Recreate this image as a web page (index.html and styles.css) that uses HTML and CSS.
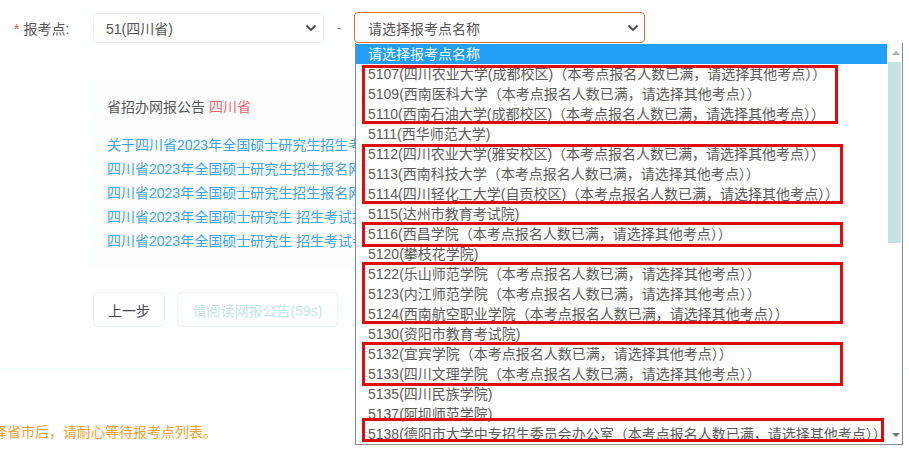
FILE: index.html
```
<!DOCTYPE html>
<html lang="zh-CN">
<head>
<meta charset="utf-8">
<title>报考点</title>
<link rel="stylesheet" href="styles.css">
</head>
<body>
<div class="page">
  <div class="form-row">
    <div class="label"><span class="star">*</span>报考点:</div>
    <div class="select sel-prov">
      <span>51(四川省)</span>
      <svg class="chev" width="12" height="8" viewBox="0 0 12 8"><polyline points="1.5,1.5 6,6 10.5,1.5" fill="none" stroke="#4a4a4a" stroke-width="1.8"/></svg>
    </div>
    <div class="dash">-</div>
    <div class="select sel-site">
      <span>请选择报考点名称</span>
      <svg class="chev" width="12" height="8" viewBox="0 0 12 8"><polyline points="1.5,1.5 6,6 10.5,1.5" fill="none" stroke="#4a4a4a" stroke-width="1.8"/></svg>
    </div>
  </div>

  <div class="notice">
    <div class="notice-title">省招办网报公告 <span class="prov">四川省</span></div>
    <ul class="links">
      <li>关于四川省2023年全国硕士研究生招生考试网上报名的公告</li>
      <li>四川省2023年全国硕士研究生招生报名网上确认公告</li>
      <li>四川省2023年全国硕士研究生招生报名网报须知</li>
      <li>四川省2023年全国硕士研究生 招生考试报考点信息</li>
      <li>四川省2023年全国硕士研究生 招生考试考生须知</li>
    </ul>
  </div>

  <div class="buttons">
    <button class="btn">上一步</button>
    <button class="btn btn-disabled">请阅读网报公告(59s)</button>
  </div>
</div>
<div class="divider"></div>
<p class="tip">选择省市后，请耐心等待报考点列表。</p>

<div class="dropdown">
  <div class="list">
    <div class="opt opt-head">请选择报考点名称</div>
    <div class="opt">5107(四川农业大学(成都校区)（本考点报名人数已满，请选择其他考点））</div>
    <div class="opt">5109(西南医科大学（本考点报名人数已满，请选择其他考点））</div>
    <div class="opt">5110(西南石油大学(成都校区)（本考点报名人数已满，请选择其他考点））</div>
    <div class="opt">5111(西华师范大学)</div>
    <div class="opt">5112(四川农业大学(雅安校区)（本考点报名人数已满，请选择其他考点））</div>
    <div class="opt">5113(西南科技大学（本考点报名人数已满，请选择其他考点））</div>
    <div class="opt">5114(四川轻化工大学(自贡校区)（本考点报名人数已满，请选择其他考点））</div>
    <div class="opt">5115(达州市教育考试院)</div>
    <div class="opt">5116(西昌学院（本考点报名人数已满，请选择其他考点））</div>
    <div class="opt">5120(攀枝花学院)</div>
    <div class="opt">5122(乐山师范学院（本考点报名人数已满，请选择其他考点））</div>
    <div class="opt">5123(内江师范学院（本考点报名人数已满，请选择其他考点））</div>
    <div class="opt">5124(西南航空职业学院（本考点报名人数已满，请选择其他考点））</div>
    <div class="opt">5130(资阳市教育考试院)</div>
    <div class="opt">5132(宜宾学院（本考点报名人数已满，请选择其他考点））</div>
    <div class="opt">5133(四川文理学院（本考点报名人数已满，请选择其他考点））</div>
    <div class="opt">5135(四川民族学院)</div>
    <div class="opt">5137(阿坝师范学院)</div>
    <div class="opt">5138(德阳市大学中专招生委员会办公室（本考点报名人数已满，请选择其他考点））</div>
  </div>
  <div class="scrollbar">
    <div class="sb-arrow sb-up"></div>
    <div class="sb-thumb"></div>
    <div class="sb-track"></div>
    <div class="sb-arrow sb-down"></div>
  </div>
  <div class="mark mark1"></div>
  <div class="mark mark2"></div>
  <div class="mark mark3"></div>
  <div class="mark mark4"></div>
  <div class="mark mark5"></div>
  <div class="mark mark6"></div>
</div>
</body>
</html>
```
FILE: styles.css
```
* { box-sizing: border-box; }
html, body { margin: 0; padding: 0; }
body {
  width: 909px;
  height: 472px;
  overflow: hidden;
  position: relative;
  background: #fff;
  font-family: "Liberation Sans", "Noto Sans CJK SC", sans-serif;
  font-size: 14px;
  color: #555;
}
.page { padding-left: 12px; }

.form-row {
  display: flex;
  align-items: center;
  padding-top: 12px;
  height: 43px;
}
.label { width: 81px; color: #555; }
.star { color: #e8622a; margin: 0 4px 0 2px; }
.select {
  display: flex;
  align-items: center;
  justify-content: space-between;
  background: #fff;
  color: #555;
}
.sel-prov {
  width: 231px;
  height: 30px;
  border: 1px solid #e2f3f3;
  border-radius: 3px;
  padding: 0 6px 0 12px;
}
.dash { width: 30px; text-align: center; color: #777; }
.sel-site {
  width: 291px;
  height: 31px;
  border: 1px solid #de6c35;
  border-radius: 4px;
  padding: 0 5px 0 13px;
}

.notice {
  margin: 37px 0 0 80px;
  width: 263px;
  height: 187px;
  overflow: hidden;
  background: #fbfdfe;
  padding: 17px 0 0 15px;
}
.notice-title { line-height: 20px; color: #555; }
.prov { color: #e86a6a; }
.links {
  list-style: none;
  margin: 16px 0 0 0;
  padding: 0;
  white-space: nowrap;
}
.links li { line-height: 24px; color: #3fa3e6; }

.buttons {
  display: flex;
  gap: 12px;
  margin: 25px 0 0 81px;
}
.btn {
  height: 35px;
  padding: 0 14px;
  border: 1px solid #e4f5f6;
  border-radius: 4px;
  background: #fff;
  font-family: inherit;
  font-size: 14px;
  color: #445;
}
.btn-disabled { width: 161px; color: #c2e7ec; }

.divider {
  margin-top: 41px;
  height: 1px;
  background: #eef8f8;
}
.tip {
  margin: 53px 0 0 -21px;
  line-height: 20px;
  color: #f0a030;
  white-space: nowrap;
}

.dropdown {
  position: absolute;
  left: 355px;
  top: 43px;
  width: 548px;
  height: 402px;
  border: 1px solid #8a8a8a;
  border-top: none;
  background: #fff;
  display: flex;
}
.list { flex: 1; padding-top: 1px; }
.opt {
  height: 20px;
  line-height: 20px;
  padding-left: 12px;
  color: #5a5a5a;
  white-space: nowrap;
}
.opt-head { background: #22a0f8; color: #fff; }

.scrollbar {
  width: 17px;
  display: flex;
  flex-direction: column;
  padding-top: 1px;
}
.sb-arrow {
  height: 18px;
  position: relative;
  background: #fff;
}
.sb-arrow::after {
  content: "";
  position: absolute;
  left: 5px;
  width: 0;
  height: 0;
  border-left: 4px solid transparent;
  border-right: 4px solid transparent;
}
.sb-up::after { top: 7px; border-bottom: 4px solid #a8b0b0; }
.sb-down::after { top: 7px; border-top: 4px solid #707070; }
.sb-thumb { height: 181px; background: #c6e3e1; margin: 0 1px; }
.sb-track { flex: 1; background: #fff; }

.mark {
  position: absolute;
  left: 6px;
  border: 3px solid #e10a0a;
}
.mark1 { top: 22px; width: 476px; height: 59px; }
.mark2 { top: 101px; width: 481px; height: 60px; }
.mark3 { top: 179px; width: 481px; height: 25px; }
.mark4 { top: 219px; width: 481px; height: 62px; }
.mark5 { top: 299px; width: 481px; height: 44px; }
.mark6 { top: 375px; width: 522px; height: 24px; }
```
